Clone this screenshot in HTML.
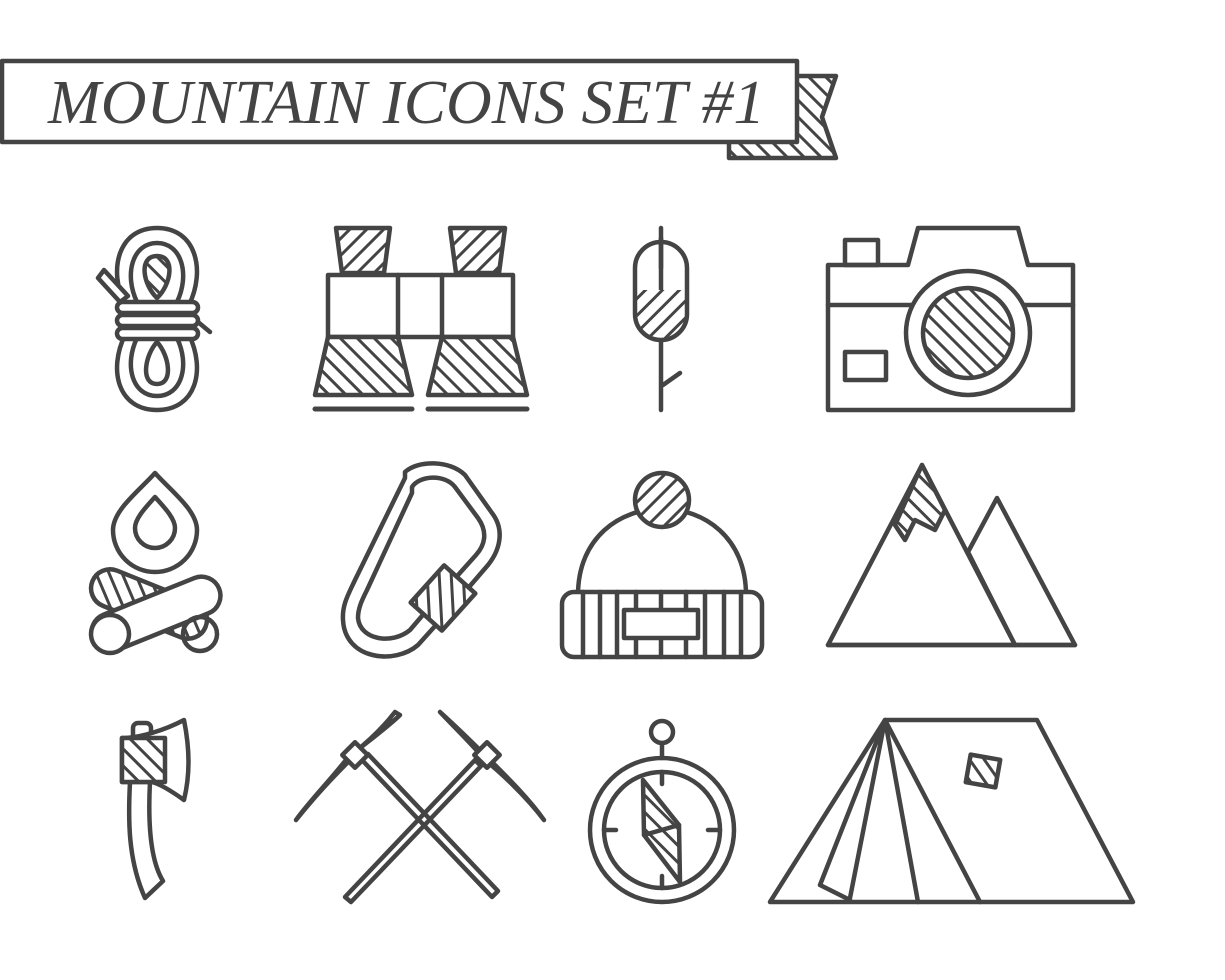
<!DOCTYPE html>
<html><head><meta charset="utf-8"><style>
html,body{margin:0;padding:0;background:#fff;}
svg{display:block;}
</style></head><body>
<svg width="1225" height="980" viewBox="0 0 1225 980" xmlns="http://www.w3.org/2000/svg">
<defs>
<pattern id="h" patternUnits="userSpaceOnUse" width="12" height="12" patternTransform="rotate(45)">
<rect width="12" height="12" fill="#fff"/><rect x="0" y="0" width="3" height="12" fill="#444"/>
</pattern>
<pattern id="g" patternUnits="userSpaceOnUse" width="12" height="12" patternTransform="rotate(-45)">
<rect width="12" height="12" fill="#fff"/><rect x="0" y="0" width="3" height="12" fill="#444"/>
</pattern>
</defs>
<g fill="none" stroke="#444" stroke-width="4.5" stroke-linejoin="round" stroke-linecap="round">
<polygon points="729,76 836,76 822,117 836,158 729,158" fill="url(#g)"/>
<rect x="2" y="61" width="795" height="81" fill="#fff"/>
</g>
<text x="48" y="123" font-family="Liberation Serif, serif" font-style="italic" font-size="62" fill="#444" textLength="717" lengthAdjust="spacingAndGlyphs">MOUNTAIN ICONS SET #1</text>

<g fill="none" stroke="#444" stroke-width="4.5" stroke-linejoin="round" stroke-linecap="round">
<!-- rope -->
<path d="M125,305 C108,270 118,228 157,228 C196,228 206,270 189,305"/>
<path d="M137,302 C124,275 132,243 157,243 C182,243 190,275 177,302"/>
<path d="M157,298 C143,285 138,256 157,256 C176,256 171,285 157,298Z" fill="url(#g)"/>
<path d="M125,335 C108,370 118,410 157,410 C196,410 206,370 189,335"/>
<path d="M137,338 C124,365 132,396 157,396 C182,396 190,365 177,338"/>
<path d="M157,342 C145,355 140,384 157,384 C174,384 169,355 157,342Z"/>
<path d="M98,278 L104,270 L128,296 L120,302Z" fill="#fff"/>
<rect x="117" y="302" width="81" height="11" rx="5.5" fill="#fff"/>
<rect x="117" y="315" width="81" height="11" rx="5.5" fill="#fff"/>
<rect x="117" y="328" width="81" height="11" rx="5.5" fill="#fff"/>
<path d="M198,322 L210,332"/>
<!-- binoculars -->
<polygon points="336,228 390,228 384,273 342,273" fill="url(#h)"/>
<polygon points="450,228 505,228 499,273 456,273" fill="url(#h)"/>
<rect x="328" y="275" width="185" height="62" fill="#fff"/>
<path d="M398,275 V337 M442,275 V337"/>
<polygon points="328,337 398,337 412,395 315,395" fill="url(#g)"/>
<polygon points="442,337 513,337 527,395 428,395" fill="url(#g)"/>
<path d="M315,409 H412 M428,409 H527" stroke-width="5"/>
<!-- marshmallow -->
<path d="M661,228 V410 M663,385 L680,373"/>
<path d="M637,290 H685 V314 A24,24 0 0 1 637,314Z" fill="url(#h)" stroke="none"/>
<rect x="635" y="242" width="52" height="98" rx="26"/>
<path d="M661,238 V268"/>
<!-- camera -->
<rect x="845" y="240" width="33" height="25"/>
<path d="M828,265 H908 L918,228 H1018 L1028,265 H1073 V410 H828Z"/>
<path d="M828,305 H1073"/>
<circle cx="968" cy="333" r="62" fill="#fff"/>
<circle cx="968" cy="333" r="45" fill="url(#g)"/>
<rect x="845" y="352" width="41" height="28"/>
<!-- fire -->
<path d="M155,473 C140,490 113,510 113,530 A42,42 0 0 0 197,530 C197,510 170,490 155,473Z"/>
<path d="M155,497 C147,506 135,518 135,528 A20,20 0 0 0 175,528 C175,518 163,506 155,497Z"/>
<rect x="88" y="585" width="122" height="38" rx="19" transform="rotate(22 149 604)" fill="url(#g)"/>
<rect x="88" y="595" width="136" height="38" rx="19" transform="rotate(-22 156 614)" fill="#fff"/>
<circle cx="110" cy="634" r="19" fill="#fff"/>
<circle cx="200" cy="634" r="17"/>
<!-- carabiner -->
<path d="M405,472 C418,460 450,460 465,475 L492,513 C505,530 500,550 488,565 L445,615 L418,645 C395,665 345,660 343,620 C342,605 348,595 355,580 L405,478Z"/>
<path d="M412,487 C420,475 445,474 455,487 L478,518 C488,532 485,545 476,555 L433,603 L410,630 C392,645 360,640 358,618 C358,608 362,600 367,590 L412,493Z"/>
<rect x="418" y="577" width="50" height="42" transform="rotate(-48 443 598)" fill="url(#h)"/>
<!-- hat -->
<path d="M578,595 C578,480 746,480 746,595" fill="#fff"/>
<circle cx="662" cy="500" r="27" fill="url(#h)"/>
<rect x="562" y="592" width="200" height="65" rx="12" fill="#fff"/>
<path d="M583,592 V657 M600,592 V657 M617,592 V657 M636,592 V657 M661,592 V657 M686,592 V657 M705,592 V657 M724,592 V657 M741,592 V657"/>
<rect x="624" y="610" width="74" height="28" fill="#fff"/>
<!-- mountains -->
<polygon points="968,552 997,498 1075,645 1015,645" fill="#fff"/>
<polygon points="828,645 922,465 1015,645" fill="#fff"/>
<path d="M922,465 L945,510 L935,530 L915,520 L905,540 L895,525 Z" fill="url(#g)"/>
<path d="M828,645 H1075"/>
<!-- axe -->
<path d="M130,782 C128,820 128,860 145,898 L163,881 C150,860 148,820 150,782"/>
<rect x="133" y="723" width="18" height="18" rx="5"/>
<path d="M122,738 C140,738 165,730 184,720 C190,750 190,775 184,800 C170,790 160,784 152,782 H122Z" fill="#fff"/>
<path d="M122,738 H165 V782 H122Z" fill="url(#g)"/>
<!-- ice axes -->
<path d="M362,760 L492,897 L498,891 L368,754Z"/>
<path d="M475,760 L345,897 L351,902 L481,766Z"/>
<path d="M296,820 C320,790 340,770 360,750 L355,748 C340,770 310,800 296,820Z"/>
<path d="M355,752 C370,740 390,725 400,715 L395,712 C385,725 370,740 355,752Z"/>
<path d="M440,712 C460,730 475,745 490,760 C510,780 530,800 544,820 C525,795 500,772 485,760 C470,742 455,728 440,712Z"/>
<rect x="346" y="746" width="18" height="18" transform="rotate(45 355 755)" fill="#fff"/>
<rect x="478" y="746" width="18" height="18" transform="rotate(-45 487 755)" fill="#fff"/>
<!-- compass -->
<circle cx="662" cy="732" r="11"/>
<path d="M662,743 V758"/>
<circle cx="662" cy="830" r="72"/>
<circle cx="662" cy="830" r="58"/>
<path d="M662,772 V784 M662,876 V888 M604,830 H616 M708,830 H720"/>
<path d="M643,780 L679,825 L680,882 L644,835Z" fill="url(#g)"/>
<path d="M644,835 L679,825"/>
<!-- tent -->
<polygon points="770,902 885,720 1037,720 1133,902"/>
<path d="M885,720 L980,902 M885,720 L918,902 M885,720 L850,898 M885,720 L820,885 L850,900"/>
<rect x="968" y="757" width="30" height="28" transform="rotate(10 983 771)" fill="url(#g)"/>
</g>
</svg>
</body></html>
